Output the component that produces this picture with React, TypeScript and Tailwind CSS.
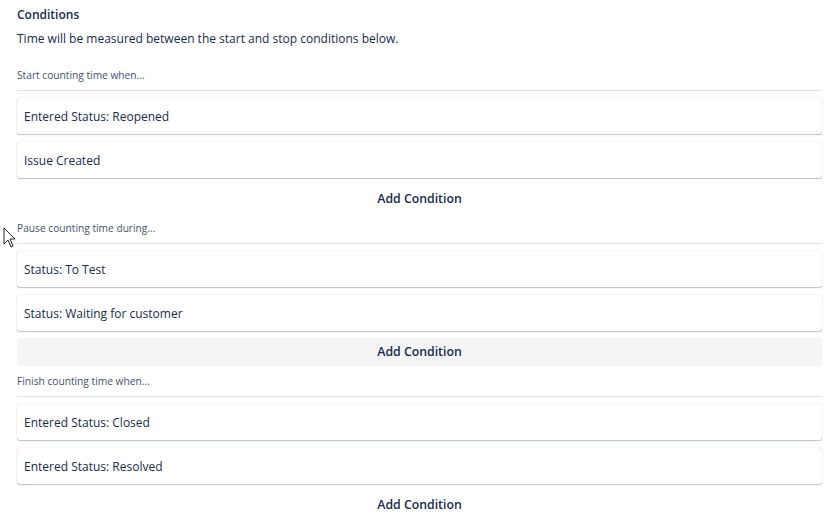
import React from 'react';

interface Section {
  label: string;
  items: string[];
  hovered?: boolean;
}

const sections: Section[] = [
  { label: 'Start counting time when...', items: ['Entered Status: Reopened', 'Issue Created'] },
  { label: 'Pause counting time during...', items: ['Status: To Test', 'Status: Waiting for customer'], hovered: true },
  { label: 'Finish counting time when...', items: ['Entered Status: Closed', 'Entered Status: Resolved'] },
];

function Cursor() {
  return (
    <svg className="absolute left-[3px] top-[227px]" width="14" height="22" viewBox="0 0 14 22">
      <path d="M1 1 L1 17 L5 13 L8 20 L10 19 L7 12 L12 12 Z" fill="#fff" stroke="#222" strokeWidth="1" strokeLinejoin="round" />
    </svg>
  );
}

export default function App() {
  return (
    <div
      className="relative w-[827px] h-[530px] overflow-hidden bg-white pl-[17px] pr-[5px] pt-[6px] text-[#172b4d]"
      style={{ fontFamily: '"Open Sans", "Noto Sans", Arial, sans-serif' }}
    >
      <h3 className="text-[12px] leading-[18px] font-semibold">Conditions</h3>
      <p className="mt-[6px] text-[12px] leading-[18px]">
        Time will be measured between the start and stop conditions below.
      </p>
      <div className="mt-[20px] flex flex-col gap-[8px]">
        {sections.map((s) => (
          <div key={s.label}>
            <div className="text-[10.2px] leading-[14px] text-[#42526e] pb-[8px] border-b border-[#dfe1e6]">{s.label}</div>
            <div className="mt-[7px] flex flex-col gap-[8px]">
              {s.items.map((it) => (
                <div
                  key={it}
                  className="h-[36px] flex items-center px-[7px] pt-[1px] bg-white rounded-[3px] text-[12px] shadow-[0_1px_1px_rgba(9,30,66,0.25),0_0_1px_rgba(9,30,66,0.31)]"
                >
                  {it}
                </div>
              ))}
            </div>
            <button
              className={`mt-[7px] w-full h-[28px] flex items-center justify-center text-[12.3px] font-semibold text-[#172b4d] rounded-[3px] ${
                s.hovered ? 'bg-[#f4f5f7]' : ''
              }`}
            >
              Add Condition
            </button>
          </div>
        ))}
      </div>
      <Cursor />
    </div>
  );
}
